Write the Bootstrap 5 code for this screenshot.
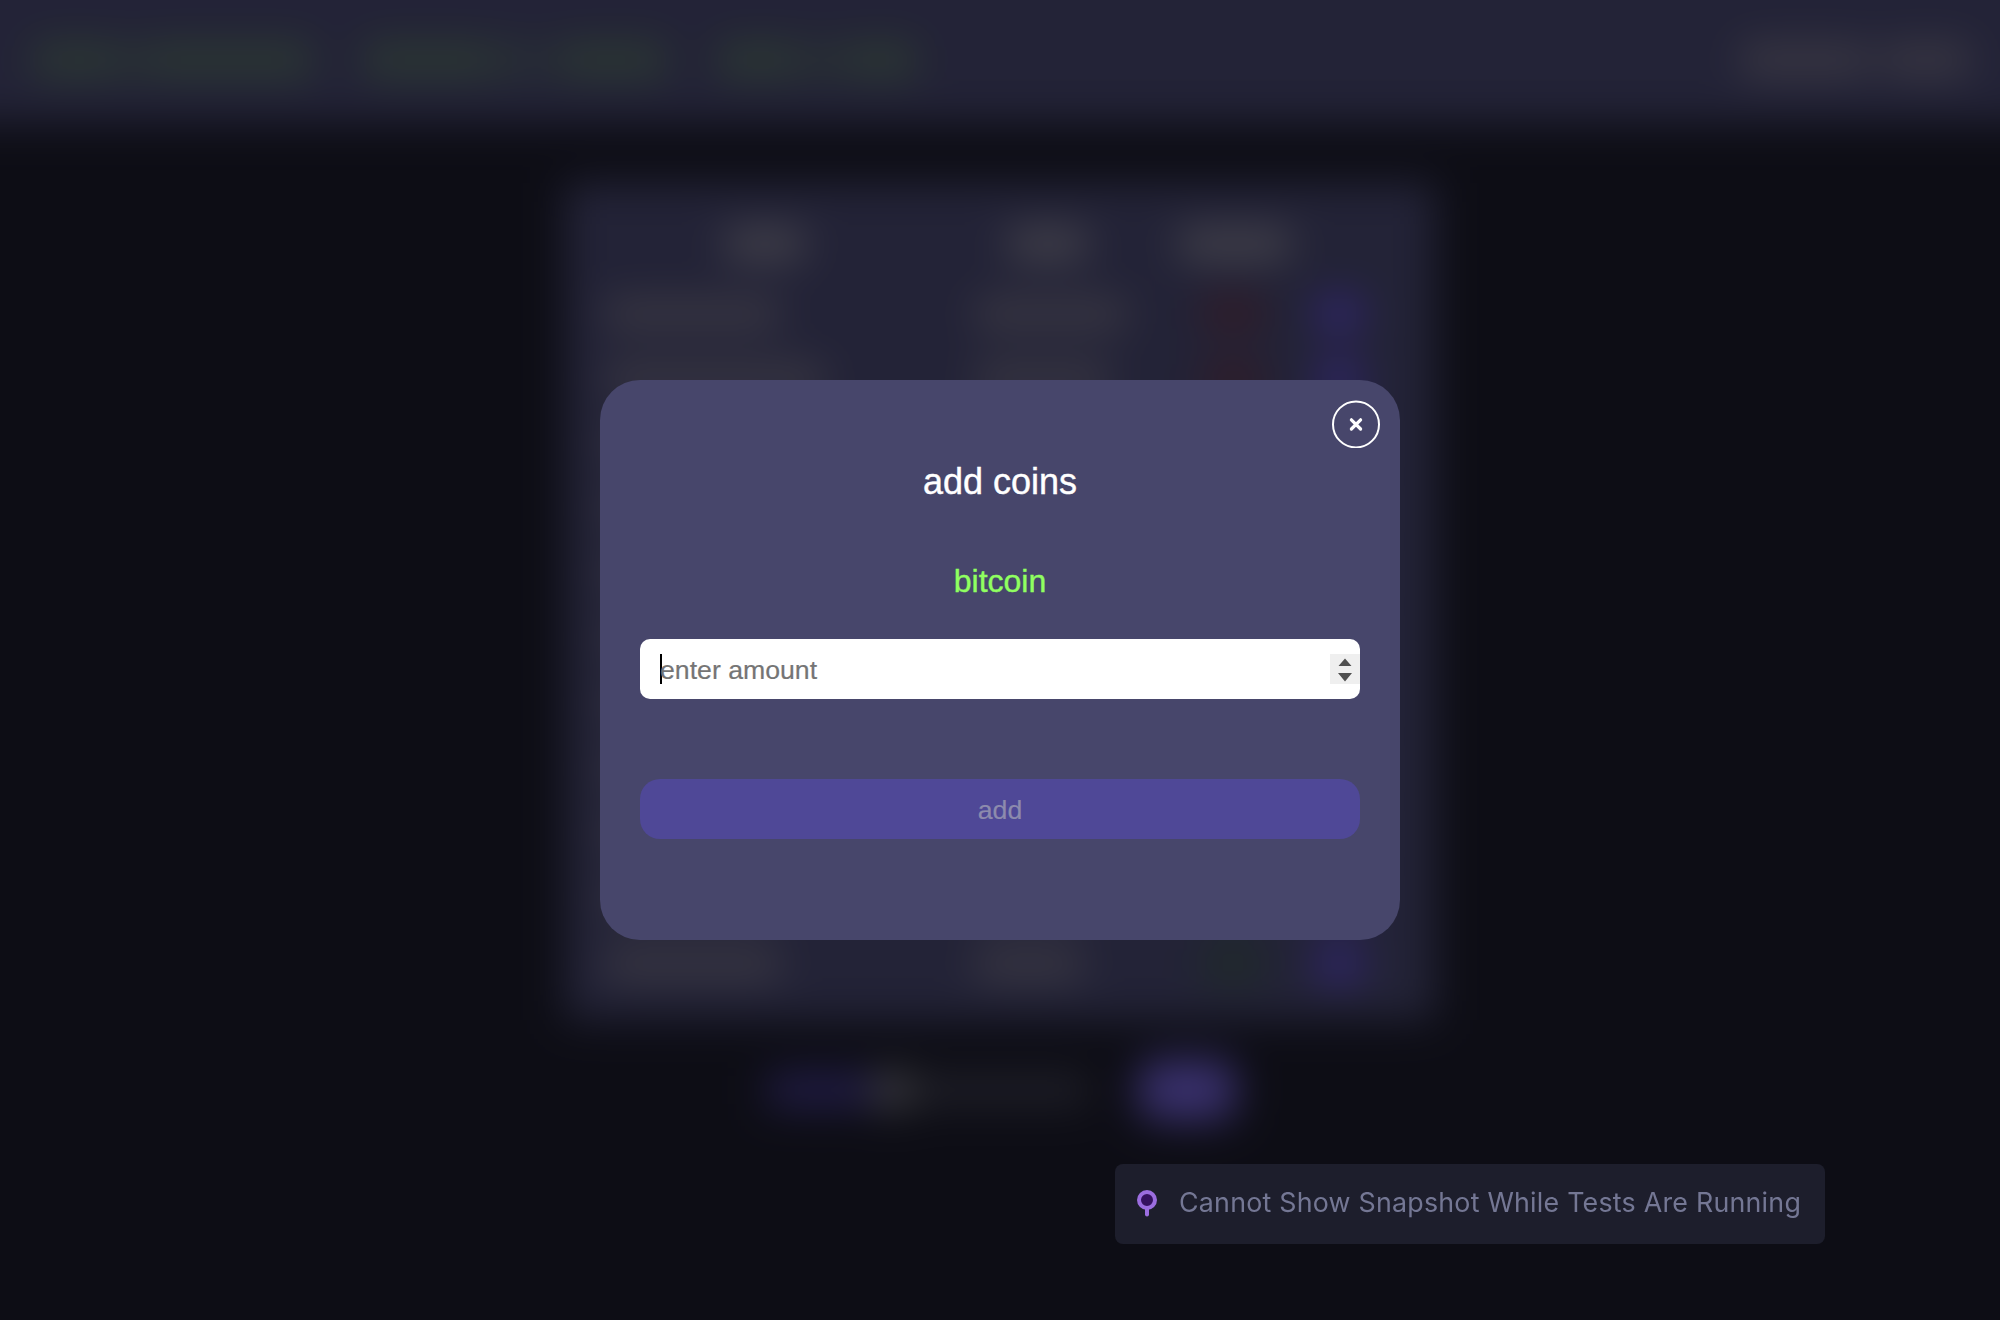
<!DOCTYPE html>
<html lang="en">
<head>
<meta charset="utf-8">
<title>add coins</title>
<link href="https://cdn.jsdelivr.net/npm/bootstrap@5.3.0/dist/css/bootstrap.min.css" rel="stylesheet">
<style>
  body{background:#1a1a2a;font-family:"Liberation Sans",Arial,sans-serif;width:2000px;height:1320px;overflow:hidden}
  /* the page behind the dialog bleeds past the window so the blur has no soft rim */
  .behind{inset:-80px;background:#1b1b2b;filter:blur(20px)}
  .topbar{height:203px;background:#46466e;padding:77px 110px 0 112px}
  .bar{height:32px;flex:none;border-radius:8px}
  .topbar .bar{height:34px}
  .green{background:rgba(134,215,86,.3)}
  .faint{background:rgba(134,215,86,.18)}
  .light{background:rgba(255,240,215,.24)}
  .head{background:rgba(255,245,225,.35)}
  .w25{width:25px}.w50{width:50px}.w70{width:70px}.w80{width:80px}.w90{width:88px}.w110{width:112px}.w130{width:130px}.w160{width:168px}
  .g25{margin-left:12px}.g55{margin-left:50px}
  .panel{width:870px;height:837px;margin-top:60px;background:#46466e;padding:24px 0 0 40px}
  .line{display:grid;grid-template-columns:320px 195px 165px 100px;height:65px;align-items:center}
  .line.titles{height:74px}
  .c2{padding-left:50px}.c3{padding-left:82px}.c4{padding-left:30px}
  .titles .c2{padding-left:83px}.titles .c3{padding-left:59px}
  .up{background:rgba(50,110,30,.4);width:62px}
  .down{background:rgba(150,30,20,.38);width:62px}
  .plus{background:#6a4cff;opacity:.7;width:48px;height:36px}
  .foot{margin-top:36px;height:68px;padding-left:4px}
  .fill{width:104px;height:34px;background:#43398e}
  .thumb{width:42px;height:42px;border-radius:50%;background:#77777f}
  .track{width:174px;height:30px;background:#404052}
  .act{width:98px;height:62px;background:#7160d8;border-radius:20px;margin-left:50px}
  .veil{background:rgba(0,0,0,.5)}
  .dialog{width:800px;height:560px;background:#47466b;border-radius:40px;padding:20px 40px 0}
  .closer{width:48px;height:48px;margin-right:-20px}
  .ttl,.coin{-webkit-text-stroke:.4px currentColor}
  .ttl{font-size:36px;line-height:42px;margin-top:13px;color:#fff}
  .coin{font-size:32px;line-height:36px;margin-top:60px;color:#90ff60}
  .amount{height:60px;background:#fff;border-radius:10px;margin-top:40px;padding-left:20px;color:#757575;font-size:26.667px}
  .amount span{padding-top:2px;-webkit-text-stroke:.2px currentColor}
  .caret{width:2px;height:30px;background:#000;margin-right:-2px}
  .spin{width:30px;height:30px;background:#efefef}
  .addbtn,.addbtn:disabled{height:60px;border-radius:20px;margin-top:80px;background:#4f4897;color:#8d8bad;font-size:26.667px;border:0;opacity:1;padding:2px 0 0;line-height:58px;-webkit-text-stroke:.2px currentColor}
  .notice{left:1115px;top:1164px;width:710px;height:80px;background:#1d1e2c;border-radius:8px;padding-left:20px;color:#747794;font-family:Inter,sans-serif;font-size:26.8px;white-space:nowrap}
  .notice span{margin-left:20px;letter-spacing:.23px;padding-bottom:4px}
</style>
</head>
<body>
<div class="behind position-fixed">
  <header class="topbar d-flex align-items-center">
    <div class="bar green w90"></div><div class="bar faint w25"></div><div class="bar green w160"></div>
    <div class="bar green w130 g55"></div><div class="bar faint w50"></div><div class="bar green w110 g25"></div>
    <div class="bar green w80 g55"></div><div class="bar faint w50"></div><div class="bar green w70"></div>
    <div class="bar light w130 ms-auto"></div><div class="bar light w90 g25"></div>
  </header>
  <main class="d-flex flex-column align-items-center">
    <section class="panel" id="panel">
      <div class="line titles">
        <div class="d-flex justify-content-center"><div class="bar head w80"></div></div>
        <div class="c2"><div class="bar head w80"></div></div>
        <div class="c3"><div class="bar head w110"></div></div>
      </div>
    </section>
    <div class="foot d-flex align-items-center">
      <div class="fill"></div><div class="thumb"></div><div class="track"></div><div class="act"></div>
    </div>
  </main>
</div>

<div class="veil position-fixed top-0 start-0 w-100 h-100 d-flex align-items-center justify-content-center">
  <div class="dialog d-flex flex-column">
    <div class="closer align-self-end">
      <svg class="d-block" width="48" height="48" viewBox="0 0 48 48" fill="none" stroke="#fff"><circle cx="24" cy="24.4" r="23" stroke-width="2"/><path d="M19.4 19.8l9.2 9.2M28.6 19.8l-9.2 9.2" stroke-width="3.2" stroke-linecap="round"/></svg>
    </div>
    <div class="ttl text-center">add coins</div>
    <div class="coin text-center">bitcoin</div>
    <div class="amount d-flex align-items-center">
      <div class="caret"></div><span>enter amount</span>
      <div class="spin ms-auto"><svg class="d-block" width="30" height="30" viewBox="0 0 30 30" fill="#505050"><path d="M15 4.5L21.5 12h-13zM15 27.5L8 19h14z"/></svg></div>
    </div>
    <button class="addbtn btn w-100" disabled>add</button>
  </div>
</div>

<div class="notice position-fixed d-flex align-items-center">
  <svg width="24" height="32" viewBox="0 0 24 32"><path d="M12 20v6.5" stroke="#9b6ddf" stroke-width="4" stroke-linecap="round"/><circle cx="12" cy="12" r="8" fill="#35125f" stroke="#9b6ddf" stroke-width="4"/></svg>
  <span>Cannot Show Snapshot While Tests Are Running</span>
</div>
<script src="https://cdn.jsdelivr.net/npm/bootstrap@5.3.0/dist/js/bootstrap.bundle.min.js"></script>
<script>
  // one row per coin: name width, price width, direction
  const coins=[[175,152,'down'],[220,135,'down'],[150,120,'up'],[160,120,'down'],[170,120,'up'],[150,120,'up'],[190,110,'down'],[160,110,'up'],[150,110,'up'],[170,110,'up'],[176,108,'up']];
  document.getElementById('panel').insertAdjacentHTML('beforeend',coins.map(([n,p,d])=>
    `<div class="line"><div><div class="bar light" style="width:${n}px"></div></div><div class="c2"><div class="bar light" style="width:${p}px"></div></div><div class="c3"><div class="bar ${d}"></div></div><div class="c4"><div class="bar plus"></div></div></div>`).join(''));
</script>
</body>
</html>
